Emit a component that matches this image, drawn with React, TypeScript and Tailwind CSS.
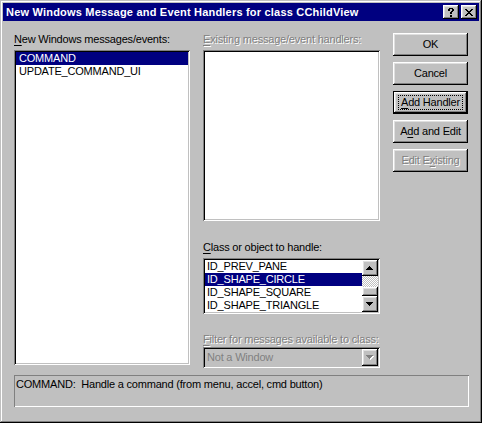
import React from 'react';

const sunken =
  'shadow-[inset_1px_1px_0_#808080,inset_-1px_-1px_0_#ffffff,inset_2px_2px_0_#000000,inset_-2px_-2px_0_#c0c0c0]';
const raised =
  'shadow-[inset_-1px_-1px_0_#000000,inset_1px_1px_0_#ffffff,inset_-2px_-2px_0_#808080,inset_2px_2px_0_#dfdfdf]';
const emboss = 'text-[#808080] [text-shadow:1px_1px_0_#ffffff]';

function U({ children }: { children: React.ReactNode }) {
  return <span className="underline underline-offset-[2px] decoration-1">{children}</span>;
}

function CloseGlyph() {
  return (
    <svg width="8" height="7" viewBox="0 0 8 7" shapeRendering="crispEdges">
      <path
        d="M0 0h2v1H0zM6 0h2v1H6zM1 1h2v1H1zM5 1h2v1H5zM2 2h4v1H2zM3 3h2v1H3zM2 4h4v1H2zM1 5h2v1H1zM5 5h2v1H5zM0 6h2v1H0zM6 6h2v1H6z"
        fill="#000"
      />
    </svg>
  );
}

function HelpGlyph() {
  return (
    <svg width="6" height="9" viewBox="0 0 6 9" shapeRendering="crispEdges">
      <path
        d="M1 0h4v1H1zM0 1h2v2H0zM4 1h2v2H4zM3 3h2v1H3zM2 4h2v2H2zM2 7h2v2H2z"
        fill="#000"
      />
    </svg>
  );
}

function Arrow({ dir, disabled = false }: { dir: 'up' | 'down'; disabled?: boolean }) {
  const d = dir === 'up' ? 'M3 0h1v1H3zM2 1h3v1H2zM1 2h5v1H1zM0 3h7v1H0z' : 'M0 0h7v1H0zM1 1h5v1H1zM2 2h3v1H2zM3 3h1v1H3z';
  return (
    <svg width="8" height="5" viewBox="0 0 8 5" shapeRendering="crispEdges">
      {disabled && <path d={d} fill="#fff" transform="translate(1 1)" />}
      <path d={d} fill={disabled ? '#808080' : '#000'} />
    </svg>
  );
}

function ScrollBtn({ dir }: { dir: 'up' | 'down' }) {
  return (
    <div className={`w-[16px] h-[16px] bg-[#c0c0c0] flex items-center justify-center ${raised}`}>
      <Arrow dir={dir} />
    </div>
  );
}

function Button({ children, def = false, disabled = false }: { children: React.ReactNode; def?: boolean; disabled?: boolean }) {
  return (
    <div
      className={`w-[75px] h-[23px] bg-[#c0c0c0] flex items-center justify-center ${raised} ${def ? 'border border-black' : ''} ${disabled ? emboss : 'text-black'}`}
    >
      {def ? (
        <span className="flex items-center justify-center w-[65px] h-[15px] border border-dotted border-black">{children}</span>
      ) : (
        children
      )}
    </div>
  );
}

export default function App() {
  return (
    <div
      className={`w-[482px] h-[423px] bg-[#c0c0c0] p-[3px] flex flex-col text-[11px] leading-[13px] tracking-[-0.2px] text-black font-['Liberation_Sans',Arial,sans-serif] shadow-[inset_-1px_-1px_0_#000000,inset_1px_1px_0_#c0c0c0,inset_-2px_-2px_0_#808080,inset_2px_2px_0_#ffffff]`}
    >
      {/* caption */}
      <div className="h-[18px] bg-[#000080] flex items-center pl-[3px] pr-[2px]">
        <span className="flex-1 text-white font-bold text-[11px] tracking-[0.2px]">
          New Windows Message and Event Handlers for class CChildView
        </span>
        <div className={`w-[16px] h-[14px] bg-[#c0c0c0] flex items-center justify-center ${raised}`}>
          <HelpGlyph />
        </div>
        <div className={`ml-[2px] w-[16px] h-[14px] bg-[#c0c0c0] flex items-center justify-center ${raised}`}>
          <CloseGlyph />
        </div>
      </div>

      {/* client */}
      <div className="flex-1 pt-[12px] pl-[11px] flex flex-col">
        <div className="flex items-start gap-[13px]">
          {/* messages */}
          <div className="w-[176px] flex flex-col gap-[4px]">
            <div className="h-[13px] whitespace-nowrap">
              <U>N</U>ew Windows messages/events:
            </div>
            <div className={`h-[315px] bg-white p-[2px] ${sunken}`}>
              <div className="h-[13px] bg-[#000080] text-white pl-[3px]">COMMAND</div>
              <div className="h-[13px] pl-[3px]">UPDATE_COMMAND_UI</div>
            </div>
          </div>

          {/* handlers */}
          <div className="w-[177px] flex flex-col">
            <div className={`h-[13px] whitespace-nowrap ${emboss}`}>
              <U>E</U>xisting message/event handlers:
            </div>
            <div className={`mt-[4px] h-[171px] bg-white ${sunken}`} />

            <div className="mt-[20px] h-[13px] whitespace-nowrap">
              <U>C</U>lass or object to handle:
            </div>
            <div className={`mt-[4px] h-[56px] bg-white p-[2px] flex ${sunken}`}>
              <div className="flex-1 flex flex-col">
                <div className="h-[13px] pl-[2px]">ID_PREV_PANE</div>
                <div className="h-[13px] pl-[2px] bg-[#000080] text-white">ID_SHAPE_CIRCLE</div>
                <div className="h-[13px] pl-[2px]">ID_SHAPE_SQUARE</div>
                <div className="h-[13px] pl-[2px]">ID_SHAPE_TRIANGLE</div>
              </div>
              <div className="w-[16px] flex flex-col">
                <ScrollBtn dir="up" />
                <div className="flex-1 flex flex-col justify-end bg-[repeating-conic-gradient(#c0c0c0_0_25%,#ffffff_0_50%)] bg-[length:2px_2px]">
                  <div className={`h-[9px] bg-[#c0c0c0] ${raised}`} />
                </div>
                <ScrollBtn dir="down" />
              </div>
            </div>

            <div className={`mt-[19px] h-[13px] whitespace-nowrap ${emboss}`}>
              <U>F</U>ilter for messages available to class:
            </div>
            <div className={`mt-[1px] h-[21px] bg-[#c0c0c0] p-[2px] flex items-center ${sunken}`}>
              <div className="flex-1 pl-[2px] text-[#808080]">Not a Window</div>
              <div className={`w-[16px] h-[17px] flex items-center justify-center ${raised}`}>
                <Arrow dir="down" disabled />
              </div>
            </div>
          </div>

          {/* buttons */}
          <div className="w-[75px] flex flex-col gap-[6px]">
            <Button>OK</Button>
            <Button>Cancel</Button>
            <Button def>
              <U>A</U>dd Handler
            </Button>
            <Button>
              A<U>d</U>d and Edit
            </Button>
            <Button disabled>
              Edit E<U>x</U>isting
            </Button>
          </div>
        </div>

        {/* description */}
        <div className="mt-[7px] w-[455px] h-[32px] pt-[3px] pl-[2px] whitespace-pre shadow-[inset_1px_1px_0_#808080,inset_-1px_-1px_0_#ffffff]">
          COMMAND:  Handle a command (from menu, accel, cmd button)
        </div>
      </div>
    </div>
  );
}
